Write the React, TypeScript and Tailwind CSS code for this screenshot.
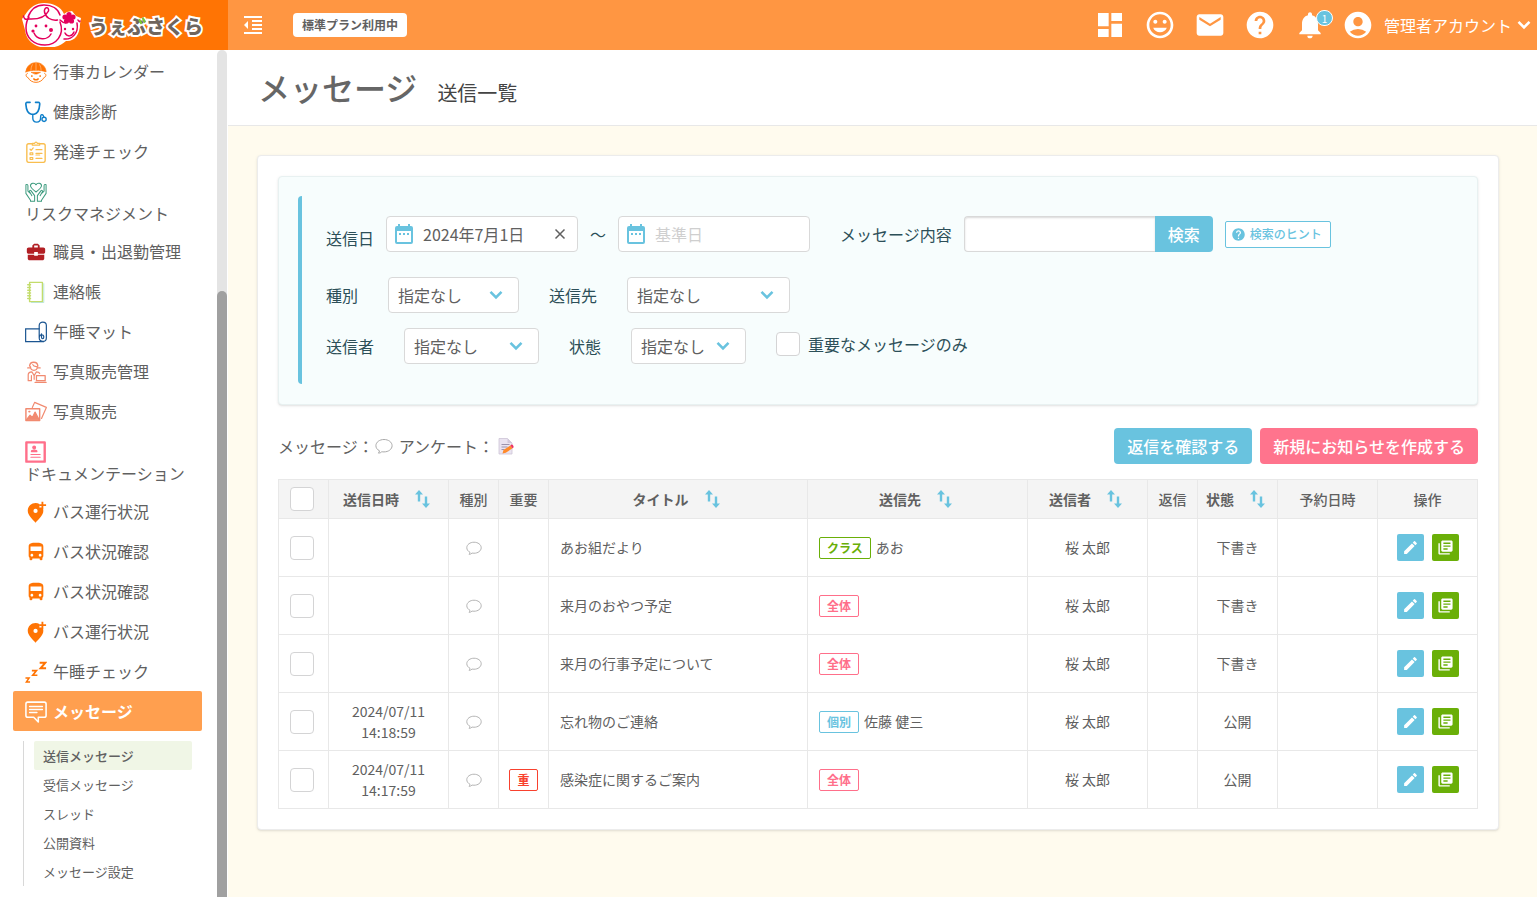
import React from 'react'
import {
    MdAccountCircle,
    MdBusinessCenter,
    MdCreate,
    MdDashboard,
    MdDirectionsBus,
    MdEmail,
    MdFormatIndentDecrease,
    MdHelp,
    MdInsertEmoticon,
    MdLibraryBooks,
    MdNotifications,
} from 'react-icons/md'

function Svg({ color, children, size = 22 }: { color: string; children: React.ReactNode; size?: number }) {
    return (
        <svg width={size} height={size} viewBox="0 0 24 24" fill="none" stroke={color} strokeWidth="1.3" strokeLinecap="round" strokeLinejoin="round" className="shrink-0">
            {children}
        </svg>
    )
}

const HelmetIcon = () => (
    <Svg color="#ff7404">
        <path d="M1 11.800C1.500 5.500 6.500 1.800 12 1.800s10.500 3.700 11 10c-6-2.300-16-2.300-22 0z" fill="#ff7404" strokeWidth=".8" />
        <path d="M12 1v9M8 4c-1 2-1.500 4-1.500 6M16 4c1 2 1.500 4 1.500 6" stroke="#ffc08a" strokeWidth=".8" />
        <path d="M2.500 13.500c-2 .8-1.800 4 .8 4.500 1.500 3.300 5 5.300 8.700 5.300s7.200-2 8.700-5.300c2.600-.5 2.800-3.700.8-4.500" strokeWidth="1" />
        <path d="M7 12.300h10l-4 2h-2z" fill="#ff7404" strokeWidth=".6" />
        <path d="M7.500 16v.8M16.500 16v.8M9.500 19.500c1.500 1.300 3.500 1.300 5 0" strokeWidth="1.500" />
    </Svg>
)

const StethoscopeIcon = () => (
    <Svg color="#0f7fca">
        <path d="M5.500 1.500H2.500C1 1.500.8 2.500 1 4c.3 5 2 9.500 6 10.500h3c4-1 5.700-5.500 6-10.500.2-1.500 0-2.500-1.500-2.500h-3" strokeWidth="1.800" />
        <path d="M8.500 15v3.500c0 6 8.500 6 8.500 0 0-3 .5-4 2-3.500 1.300.4 1 1.500 1.500 2.500" strokeWidth="1.500" />
        <circle cx="20.800" cy="20" r="2.300" strokeWidth="1.500" />
    </Svg>
)

const ChecklistIcon = () => (
    <Svg color="#f9be4f">
        <rect x="2" y="3" width="20" height="20.300" rx="2" strokeWidth="1.500" />
        <path d="M8 4.500V2.500h2.500c.5-1.800 2.500-1.800 3 0H16v2z" fill="#fff" />
        <path d="M5.500 9l1.200 1.200L9 7.500M12 9.500h6.500M12 13.500h6.500M12 15.300h4M12 19h6.500" />
        <path d="M5.500 13h3v2h-3zM5.500 18h3v2h-3z" />
    </Svg>
)

const HandsIcon = () => (
    <Svg color="#3c9b7e">
        <path d="M12 12C8 9 6 7.500 6 5.200 6 2 10.500 1.500 12 4.200 13.500 1.500 18 2 18 5.200c0 2.300-2 3.800-6 6.800z" strokeWidth="1.100" />
        <path d="M1 4v9.500L6 21v1h4.500v-6L6.500 10.500c-1-.8-2 .2-1.500 1.200L7.500 16M1 4c1.500-.5 2.200 0 2.200 1.500V11l2 2" strokeWidth="1.100" />
        <path d="M23 4v9.500L18 21v1h-4.500v-6l4-5.500c1-.8 2 .2 1.500 1.200L16.500 16M23 4c-1.500-.5-2.200 0-2.200 1.500V11l-2 2" strokeWidth="1.100" />
    </Svg>
)

const NotebookIcon = () => (
    <Svg color="#c3dc6b">
        <path d="M5 1.500h14v21H5z" strokeWidth="1.500" />
        <path d="M20.500 3v20.500H7" stroke="#b5e3d4" strokeWidth="1" />
        <path d="M3 4h3M3 7h3M3 10h3M3 13h3M3 16h3M3 19h3" strokeWidth="1.600" />
    </Svg>
)

const MatIcon = () => (
    <Svg color="#1b5591">
        <path d="M15.500 8.500H.7v14h19.500" strokeLinejoin="miter" />
        <path d="M15.500 18V5c0-5 7.800-5 7.800 0v13.500c0 5-7.800 5-7.800 0 0-4.500 5-4.500 5-1 0 2.500-2.500 2.500-2.500 0V14" />
    </Svg>
)

const PhotoStaffIcon = () => (
    <Svg color="#f18a70">
        <path d="M5 5.500c.5-5.500 8.500-5.500 9 0M3 7.500h2.500M14 7.500h2.500" strokeWidth="1.500" />
        <path d="M6 6c0 5.500 7.500 5.500 7.500 0-3 .3-4.500-.5-5-2" />
        <path d="M3.500 21.500V15c0-2 1.500-3 4-3.200l2.500 4.200 2.500-4.200c2 0 3 .7 3.500 1.700M7 16v5.500H3.500M10 16v4" />
        <path d="M12.500 16h9.500v5.500h-9.500zM11 23.400h12" strokeWidth="1.400" />
    </Svg>
)

const PhotosIcon = () => (
    <Svg color="#f18a70">
        <path d="M8 7l2.500-5.500L23.300 7 18 19" />
        <path d="M1 8.500h15v12.800H1z" fill="#fff" strokeWidth="1.600" />
        <path d="M1.500 20.500l4-5 2.500 2.500 3-6 4.500 8.500z" fill="#f18a70" />
        <path d="M4.500 11.500h.5" strokeWidth="2" />
    </Svg>
)

const DocumentIcon = () => (
    <Svg color="#ff6f8a">
        <path d="M1.500 1.500h20v21h-20z" strokeWidth="2.600" />
        <circle cx="10" cy="7" r="1.500" fill="#ff6f8a" />
        <path d="M7 11.500c0-2 6-2 6 0z" fill="#ff6f8a" />
        <path d="M6.500 14.700h10M6.500 17.700h10" />
    </Svg>
)

const PinPlusIcon = () => (
    <Svg color="#ff7404">
        <path fillRule="evenodd" stroke="none" fill="#ff7404" d="M11.500 2.300c1.600 0 3 .4 4.200 1.100V7h3.500c.5 1.100.8 2.300.8 3.600 0 4.900-5 9.300-8.500 13-3.500-3.700-8.500-8.100-8.500-13 0-4.600 3.800-8.300 8.500-8.300zm0 6.200a2.300 2.300 0 1 0 0 4.600 2.300 2.300 0 0 0 0-4.600z" />
        <path d="M19 .8v8M15.500 4.500h7.500" strokeWidth="2" strokeLinecap="butt" />
    </Svg>
)

const BusIcon = () => <MdDirectionsBus size={22} color="#ff7404" className="shrink-0" />

const SleepIcon = () => (
    <Svg color="#ff7404">
        <path d="M16 2h6l-5 6h6" strokeWidth="2.200" strokeLinejoin="miter" strokeLinecap="butt" />
        <path d="M7.500 10.500h5l-4 5h5" strokeWidth="1.800" strokeLinejoin="miter" strokeLinecap="butt" />
        <path d="M.5 18.500h4L1.500 23H5.500" strokeWidth="1.600" strokeLinejoin="miter" strokeLinecap="butt" />
    </Svg>
)

const MessageIcon = () => (
    <Svg color="#fff">
        <path d="M3 1.200h18c1.200 0 2 .8 2 2v12.600c0 1.200-.8 2-2 2h-6.500V23l-5-5.200H3c-1.200 0-2-.8-2-2V3.200c0-1.200.8-2 2-2z" strokeWidth="1.700" />
        <path d="M5 6h14M5 9.300h14M5 12.600h8" strokeWidth="1.600" />
    </Svg>
)

const ChevronIcon = ({ className }: { className: string }) => (
    <svg width="14" height="10" viewBox="0 0 14 10" fill="none" stroke="currentColor" strokeWidth="2.600" className={className}>
        <path d="M1.500 1.800L7 7.300l5.500-5.500" />
    </svg>
)

const CalendarIcon = () => (
    <svg width="18" height="20" viewBox="0 0 18 20" fill="#69c3df" className="pointer-events-none absolute top-2 left-[9px]">
        <path fillRule="evenodd" d="M3 0h2v2h8V0h2v2h1a2 2 0 0 1 2 2v14a2 2 0 0 1-2 2H2a2 2 0 0 1-2-2V4a2 2 0 0 1 2-2h1zM2 7v11h14V7z" />
        <path d="M4 9h2v2H4zM8 9h2v2H8zM12 9h2v2h-2z" />
    </svg>
)

const BalloonIcon = ({ size }: { size: number }) => (
    <svg width={size} height={size} viewBox="0 0 18 18" fill="none" stroke="#aaa" strokeWidth="1">
        <path d="M4.500 13.800C2.200 12.700.9 10.800.9 8.700c0-3.500 3.600-6.200 8.100-6.200s8.100 2.700 8.100 6.200-3.600 6.200-8.100 6.200c-.8 0-1.500 0-2.200-.2-.9 1-2 1.400-3.400 1.400.7-.7 1-1.400 1.100-2.300z" />
    </svg>
)

const SurveyIcon = () => (
    <svg width="17" height="18" viewBox="0 0 17 18">
        <path d="M1 1.500h8.500L14 6v11H1z" fill="#e9e3f0" stroke="#cdc4d6" strokeWidth=".8" />
        <path d="M9.500 1.500V6H14" fill="#d0c7da" />
        <path d="M3.500 7.500h8M3.500 10h6M3.500 12.500h3" stroke="#9c93ab" />
        <path d="M4.500 16.500l1-3.500 6.800-4.500 2.200 2.800-6.700 4.500z" fill="#ff8a2a" />
        <path d="M12.300 8.500l1-.8c1-.5 2.800 1.500 2.200 2.700l-1 .9z" fill="#ef2f63" />
    </svg>
)

const SortIcon = () => (
    <svg width="15" height="18" viewBox="0 0 15 18" fill="#69c3df" className="shrink-0">
        <path d="M4 0l4 4.500H5.200V11.500H2.800V4.500H0zM11 18l-4-4.500h2.800V6.500h2.400v7H15z" />
    </svg>
)

function Logo() {
    return (
        <a href="#" className="relative flex h-full w-[228px] shrink-0 items-center bg-[#ff7404] pl-[22px]">
            <svg width="60" height="44" viewBox="0 0 60 44" fill="none" strokeLinecap="round" className="shrink-0">
                <path d="M22 0C32 0 39 4 42 11l3-2 5-1 4 5 5 2-1 6c0 11-6 18-14 17-4 4-11 7-20 7C12 44 4 37 3 27L0 16l3-4C8 4 14 0 22 0z" fill="#fff" />
                <g stroke="#e4005c" strokeWidth="1.500">
                    <path d="M6 14C9 6 15 2 22 2c8 0 14 4 16 10M38 19c5 13-4 23-15 23S4 35 4 25c0-4 1-8 3-11" />
                    <path d="M1.500 13c.5 3 2 4 5 3 9 .5 17-2 20-8 1-5-5-4-4 1 1 5 6 9 13 8" />
                    <path d="M38 17c2 2 4 3 6 3M56 17c1 2 2 2 2 1M55 20c2 10-5 17-13 16" />
                    <path d="M12 30c3 7 13 8 17 1M43 30c2 4 7 4 9-1" />
                </g>
                <g fill="#e4005c">
                    <circle cx="14" cy="23" r="1.400" />
                    <circle cx="24" cy="23" r="1.400" />
                    <circle cx="11" cy="28" r="1.600" />
                    <circle cx="29" cy="27" r="2" />
                    <circle cx="43" cy="26" r="1.200" />
                    <circle cx="51" cy="26" r="1.200" />
                    <circle cx="47" cy="11.500" r="2.600" />
                    <circle cx="51" cy="14" r="2.600" />
                    <circle cx="49.500" cy="18" r="2.600" />
                    <circle cx="44.500" cy="18" r="2.600" />
                    <circle cx="43" cy="14" r="2.600" />
                    <circle cx="47" cy="15" r="2.600" />
                </g>
            </svg>
            <span className="ml-[7px] text-[19px] leading-none font-black whitespace-nowrap text-[#6f655d] [-webkit-text-stroke:4px_white] [paint-order:stroke_fill]">
                うぇぶさくら
            </span>
            <svg width="8" height="8" viewBox="0 0 8 8" fill="none" stroke="#7dc832" strokeWidth="2.200" strokeLinecap="round" className="absolute top-[17px] left-[138px]">
                <path d="M1.500 3l1.500 3M5 1.500L6.500 4.500" />
            </svg>
        </a>
    )
}

function Header() {
    const cell = 'flex h-full w-[50px] items-center justify-center'
    return (
        <header className="flex h-[50px] shrink-0 items-center bg-[#ff9642] text-white">
            <Logo />
            <button aria-label="メニューを閉じる" className={cell}>
                <MdFormatIndentDecrease size={24} />
            </button>
            <span className="ml-[15px] rounded bg-white px-[9px] text-xs leading-6 font-bold text-[#606060]">標準プラン利用中</span>
            <nav className="ml-auto flex h-full items-center">
                <button aria-label="ダッシュボード" className={cell}><MdDashboard size={32} /></button>
                <button aria-label="スタンプ" className={cell}><MdInsertEmoticon size={32} /></button>
                <button aria-label="メール" className={cell}><MdEmail size={32} /></button>
                <button aria-label="ヘルプ" className={cell}><MdHelp size={32} /></button>
                <button aria-label="通知" className={cell + ' relative'}>
                    <MdNotifications size={32} />
                    <span className="absolute top-2.5 left-[31px] flex h-4 w-[17px] items-center justify-center rounded-full border border-white bg-[#69c3df] text-[10px]">1</span>
                </button>
                <button className="flex h-full items-center pr-1.5 pl-[7px]">
                    <MdAccountCircle size={32} />
                    <span className="ml-[10px]">管理者アカウント</span>
                    <ChevronIcon className="ml-[5px]" />
                </button>
            </nav>
        </header>
    )
}

const menu = [
    { label: '行事カレンダー', icon: <HelmetIcon /> },
    { label: '健康診断', icon: <StethoscopeIcon /> },
    { label: '発達チェック', icon: <ChecklistIcon /> },
    { label: 'リスクマネジメント', icon: <HandsIcon /> },
    { label: '職員・出退勤管理', icon: <MdBusinessCenter size={22} color="#b21f24" className="shrink-0" /> },
    { label: '連絡帳', icon: <NotebookIcon /> },
    { label: '午睡マット', icon: <MatIcon /> },
    { label: '写真販売管理', icon: <PhotoStaffIcon /> },
    { label: '写真販売', icon: <PhotosIcon /> },
    { label: 'ドキュメンテーション', icon: <DocumentIcon /> },
    { label: 'バス運行状況', icon: <PinPlusIcon /> },
    { label: 'バス状況確認', icon: <BusIcon /> },
    { label: 'バス状況確認', icon: <BusIcon /> },
    { label: 'バス運行状況', icon: <PinPlusIcon /> },
    { label: '午睡チェック', icon: <SleepIcon /> },
]

const subMenu = ['送信メッセージ', '受信メッセージ', 'スレッド', '公開資料', 'メッセージ設定']

function Sidebar() {
    const item = 'flex flex-wrap items-start gap-x-1.5 rounded-xs px-3 pt-2.5 pb-2 leading-5'
    return (
        <aside className="flex w-[228px] shrink-0 pr-px">
            <nav className="min-w-0 flex-1 pt-px pr-[15px] pb-2.5 pl-[13px]">
                {menu.map((m, i) => (
                    <a key={i} href="#" className={item}>
                        {m.icon}
                        <span>{m.label}</span>
                    </a>
                ))}
                <a href="#" className={item + ' bg-[#ff9f4f] font-bold text-white'}>
                    <MessageIcon />
                    <span>メッセージ</span>
                </a>
                <ul className="mt-2.5 mr-2.5 ml-2.5 border-l border-[#d8d8d8] pl-2.5 text-[13px] leading-[29px]">
                    {subMenu.map((s, i) => (
                        <li key={s}>
                            <a href="#" className={i === 0 ? 'block rounded-xs bg-[#f0f6e6] px-[9px] font-medium' : 'block px-[9px]'}>{s}</a>
                        </li>
                    ))}
                </ul>
            </nav>
            <div className="flex w-2.5 flex-col justify-end rounded-t-full bg-[#e4e4e4]">
                <div className="h-[71.5%] rounded-t-full bg-[#a0a0a0]" />
            </div>
        </aside>
    )
}

function SelectBox({ id, label, labelClass, boxClass }: { id: string; label: string; labelClass: string; boxClass: string }) {
    return (
        <div className="flex items-center">
            <label htmlFor={id} className={labelClass}>{label}</label>
            <div className={'relative ' + boxClass}>
                <select id={id} className="h-9 w-full appearance-none rounded border border-[#d9d9d9] bg-white px-[9px] text-[#606060]">
                    <option>指定なし</option>
                </select>
                <ChevronIcon className="pointer-events-none absolute top-[13px] right-4 text-[#69c3df]" />
            </div>
        </div>
    )
}

const checkbox = 'block size-6 shrink-0 appearance-none rounded border border-[#d4d4d5] bg-white checked:bg-[#69c3df]'
const dateInput = 'h-9 w-48 rounded border border-[#d9d9d9] bg-white pl-9 text-[#606060] placeholder:text-[#cfcfcf]'

function SearchPanel() {
    return (
        <section className="rounded border border-[#e8f1f1] bg-[#f7fdfd] p-5 pt-[19px] pl-[19px] text-[#2c4f58] shadow-sm">
            <div className="flex flex-col rounded-l-sm border-l-4 border-[#69c3df] pt-5 pb-5 pl-6">
                <div className="flex items-center">
                    <label htmlFor="from" className="w-[60px] pt-2">送信日</label>
                    <div className="relative">
                        <input id="from" defaultValue="2024年7月1日" className={dateInput} />
                        <CalendarIcon />
                        <button aria-label="クリア" className="absolute top-3 right-3 text-[#606060]">
                            <svg width="12" height="12" viewBox="0 0 12 12" stroke="currentColor" strokeWidth="1.500">
                                <path d="M1.500 1.500l9 9M10.500 1.500l-9 9" />
                            </svg>
                        </button>
                    </div>
                    <span className="w-10 text-center">〜</span>
                    <div className="relative">
                        <input aria-label="送信日（終了）" placeholder="基準日" className={dateInput} />
                        <CalendarIcon />
                    </div>
                    <label htmlFor="body" className="ml-[30px]">メッセージ内容</label>
                    <input id="body" className="ml-3 h-9 w-[191px] rounded-l border border-r-0 border-[#d9d9d9] bg-white px-2 shadow-[inset_0_1px_2px_rgba(0,0,0,0.15)]" />
                    <button className="h-9 rounded-r bg-[#69c3df] px-[13px] font-medium text-white">検索</button>
                    <button className="ml-3 flex h-[27px] items-center gap-1 rounded-xs border border-[#69c3df] bg-white px-[5px] pr-2 text-xs font-medium text-[#69c3df]">
                        <MdHelp size={15} />
                        検索のヒント
                    </button>
                </div>
                <div className="mt-[25px] flex items-center gap-[30px]">
                    <SelectBox id="kind" label="種別" labelClass="w-[62px]" boxClass="w-[131px]" />
                    <SelectBox id="to" label="送信先" labelClass="w-[78px]" boxClass="w-[163px]" />
                </div>
                <div className="mt-[15px] flex items-center gap-[30px]">
                    <SelectBox id="sender" label="送信者" labelClass="w-[78px]" boxClass="w-[135px]" />
                    <SelectBox id="state" label="状態" labelClass="w-[62px]" boxClass="w-[115px]" />
                    <label className="flex items-center gap-2 pb-1">
                        <input type="checkbox" className={checkbox} />
                        重要なメッセージのみ
                    </label>
                </div>
            </div>
        </section>
    )
}

function Tag({ name }: { name: string }) {
    const colors: Record<string, string> = {
        クラス: 'border-[#6aaf08] text-[#6aaf08]',
        全体: 'border-[#ff6f8a] text-[#ff6f8a]',
        個別: 'border-[#69c3df] text-[#69c3df]',
        重: 'border-[#f8412e] text-[#f8412e]',
    }
    return <span className={'inline-block rounded-xs border px-[7px] text-xs leading-5 font-bold ' + colors[name]}>{name}</span>
}

const columns = [
    { label: '送信日時', sort: true, width: 'w-[120px]' },
    { label: '種別', width: 'w-[50px]' },
    { label: '重要', width: 'w-[50px]' },
    { label: 'タイトル', sort: true, width: '' },
    { label: '送信先', sort: true, width: 'w-[220px]' },
    { label: '送信者', sort: true, width: 'w-[120px]' },
    { label: '返信', width: 'w-[50px]' },
    { label: '状態', sort: true, width: 'w-[80px]' },
    { label: '予約日時', width: 'w-[100px]' },
    { label: '操作', width: 'w-[100px]' },
]

const messages = [
    { date: '', time: '', important: false, title: 'あお組だより', tag: 'クラス', to: 'あお', state: '下書き' },
    { date: '', time: '', important: false, title: '来月のおやつ予定', tag: '全体', to: '', state: '下書き' },
    { date: '', time: '', important: false, title: '来月の行事予定について', tag: '全体', to: '', state: '下書き' },
    { date: '2024/07/11', time: '14:18:59', important: false, title: '忘れ物のご連絡', tag: '個別', to: '佐藤 健三', state: '公開' },
    { date: '2024/07/11', time: '14:17:59', important: true, title: '感染症に関するご案内', tag: '全体', to: '', state: '公開' },
]

function MessageTable() {
    const td = 'border border-[#e8e8e8] text-center'
    return (
        <table className="w-full table-fixed border-collapse text-sm leading-[21px]">
            <thead>
                <tr className="h-[39px] bg-[#f4f4f4]">
                    <th className={td + ' w-[50px] pl-[11px]'}>
                        <input type="checkbox" aria-label="すべて選択" className={checkbox} />
                    </th>
                    {columns.map((c) => (
                        <th key={c.label} className={td + ' whitespace-nowrap ' + c.width}>
                            {c.sort ? (
                                <button className="mx-auto flex items-center justify-center gap-4 pr-1 font-bold">
                                    {c.label}
                                    <SortIcon />
                                </button>
                            ) : (
                                <span className="font-medium">{c.label}</span>
                            )}
                        </th>
                    ))}
                </tr>
            </thead>
            <tbody>
                {messages.map((m) => (
                    <tr key={m.title} className="h-[58px]">
                        <td className={td + ' pl-[11px]'}>
                            <input type="checkbox" aria-label={m.title} className={checkbox} />
                        </td>
                        <td className={td}>
                            {m.date}
                            <br />
                            {m.time}
                        </td>
                        <td className={td}>
                            <div className="flex justify-center"><BalloonIcon size={16} /></div>
                        </td>
                        <td className={td}>{m.important && <Tag name="重" />}</td>
                        <td className="border border-[#e8e8e8] px-[11px]">{m.title}</td>
                        <td className="border border-[#e8e8e8] px-[11px]">
                            <div className="flex items-center gap-[5px]">
                                <Tag name={m.tag} />
                                {m.to}
                            </div>
                        </td>
                        <td className={td}>桜 太郎</td>
                        <td className={td}></td>
                        <td className={td}>{m.state}</td>
                        <td className={td}></td>
                        <td className={td}>
                            <div className="flex justify-center gap-2 text-white">
                                <button aria-label="編集" className="flex size-[27px] items-center justify-center rounded-xs bg-[#69c3df]">
                                    <MdCreate size={17} />
                                </button>
                                <button aria-label="複製" className="flex size-[27px] items-center justify-center rounded-xs bg-[#6aaf08]">
                                    <MdLibraryBooks size={17} />
                                </button>
                            </div>
                        </td>
                    </tr>
                ))}
            </tbody>
        </table>
    )
}

function App() {
    return (
        <div className="flex min-h-screen flex-col bg-white font-['Noto_Sans_CJK_JP','Noto_Sans',sans-serif] text-base text-[#606060]">
            <Header />
            <div className="flex flex-1">
                <Sidebar />
                <main className="min-w-0 flex-1 bg-[#fffbee]">
                    <div className="flex h-[76px] items-center border-b border-[#e8e8e8] bg-white px-[30px] pb-px">
                        <h1 className="text-[32px] font-medium text-[#666]">メッセージ</h1>
                        <h2 className="mt-3 ml-5 text-xl text-[#444]">送信一覧</h2>
                    </div>
                    <div className="mt-[29px] mr-[38px] mb-8 ml-[29px] rounded border border-[#ececec] bg-white p-5 shadow-sm">
                        <SearchPanel />
                        <div className="mt-[23px] mb-[15px] flex items-center">
                            <p className="flex items-center">
                                メッセージ：
                                <span className="mr-1.5 ml-px flex"><BalloonIcon size={18} /></span>
                                アンケート：
                                <span className="ml-1 flex"><SurveyIcon /></span>
                            </p>
                            <button className="ml-auto h-9 rounded bg-[#69c3df] px-[13px] font-medium text-white">返信を確認する</button>
                            <button className="ml-2 h-9 rounded bg-[#ff748d] px-[13px] font-medium text-white">新規にお知らせを作成する</button>
                        </div>
                        <MessageTable />
                    </div>
                </main>
            </div>
        </div>
    )
}

export default App
